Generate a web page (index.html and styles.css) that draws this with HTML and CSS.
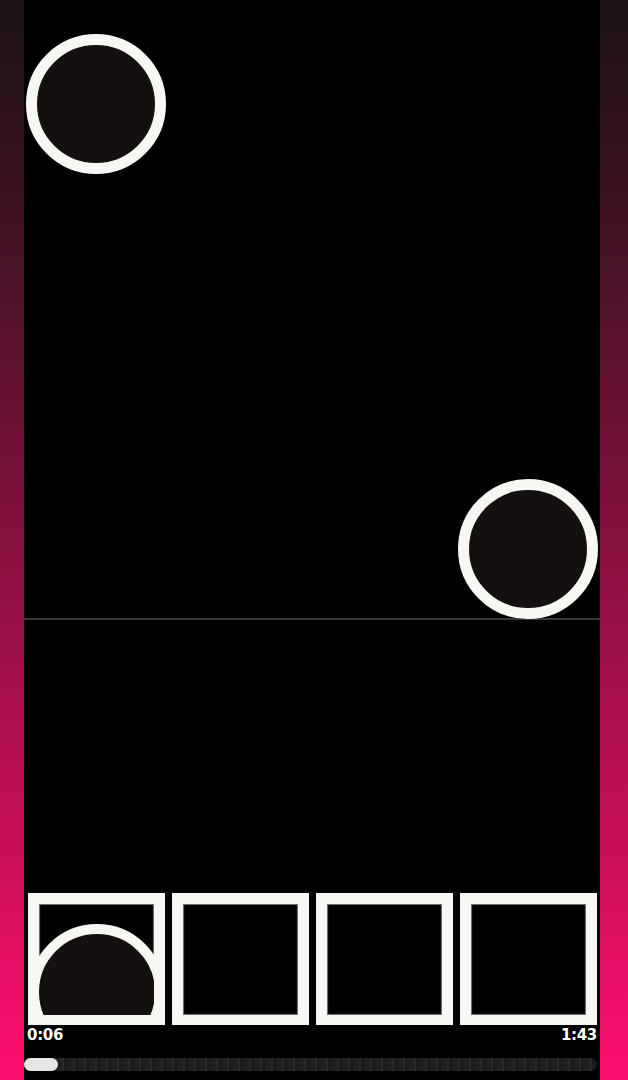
FILE: index.html
```html
<!DOCTYPE html>
<html>
<head>
<meta charset="utf-8">
<link rel="stylesheet" href="styles.css">
</head>
<body>
<div class="page">
  <div class="side"></div>
  <div class="main">
    <div class="video">
      <div class="dot dot-a"></div>
      <div class="dot dot-b"></div>
    </div>
    <div class="divider"></div>
    <div class="lower"></div>
    <div class="thumbs">
      <div class="thumb"><div class="frame"><div class="mini-dot"></div></div></div>
      <div class="thumb"><div class="frame"></div></div>
      <div class="thumb"><div class="frame"></div></div>
      <div class="thumb"><div class="frame"></div></div>
    </div>
    <div class="times">
      <span class="time">0:06</span>
      <span class="time">1:43</span>
    </div>
    <div class="track"><div class="knob"></div></div>
  </div>
  <div class="side side-r"></div>
</div>
</body>
</html>
```

FILE: styles.css
```css
html, body {
  margin: 0;
  padding: 0;
  background: #000;
}
.page {
  display: flex;
  width: 628px;
  height: 1080px;
  overflow: hidden;
}
.side {
  width: 24px;
  flex: none;
  background: linear-gradient(to bottom, #1a1214 0%, #4a1228 25%, #8a1040 52%, #c80f58 78%, #ff1070 100%);
}
.side-r {
  width: 28px;
}
.main {
  flex: 1;
  background: #000;
  display: flex;
  flex-direction: column;
}
.video {
  position: relative;
  height: 618px;
  flex: none;
}
.dot {
  position: absolute;
  width: 140px;
  height: 140px;
  box-sizing: border-box;
  border: 11px solid #f7f7f4;
  border-radius: 50%;
  background: #141010;
}
.dot-a { left: 2px; top: 34px; }
.dot-b { left: 434px; top: 479px; }
.divider {
  height: 2px;
  background: #363636;
  flex: none;
}
.lower {
  height: 273px;
  flex: none;
}
.thumbs {
  display: flex;
  gap: 7px;
  padding: 0 3px 0 4px;
  height: 132px;
  flex: none;
}
.thumb {
  width: 137px;
  height: 132px;
  box-sizing: border-box;
  border: 11px solid #f7f7f4;
  border-bottom-width: 10px;
  background: #000;
}
.frame {
  position: relative;
  width: 100%;
  height: 100%;
  overflow: hidden;
  background: #000;
  box-shadow: inset 0 0 1px 1px #777;
}
.mini-dot {
  position: absolute;
  left: -10px;
  top: 20px;
  width: 136px;
  height: 136px;
  box-sizing: border-box;
  border: 10px solid #f7f7f4;
  border-radius: 50%;
  background: #141010;
}
.times {
  display: flex;
  justify-content: space-between;
  padding: 1px 3px 0 3px;
  height: 32px;
  flex: none;
}
.time {
  font-family: "DejaVu Sans", sans-serif;
  font-weight: 700;
  font-size: 15px;
  line-height: 18px;
  color: #fff;
  letter-spacing: -0.3px;
}
.track {
  height: 13px;
  margin-right: 3px;
  border-radius: 7px;
  background: repeating-linear-gradient(to right, #202020 0px, #202020 5px, #2a2a2a 5px, #2a2a2a 7px, #1c1c1c 7px, #1c1c1c 11px);
  flex: none;
}
.knob {
  width: 34px;
  height: 13px;
  border-radius: 7px;
  background: #e6e6e4;
}
```
